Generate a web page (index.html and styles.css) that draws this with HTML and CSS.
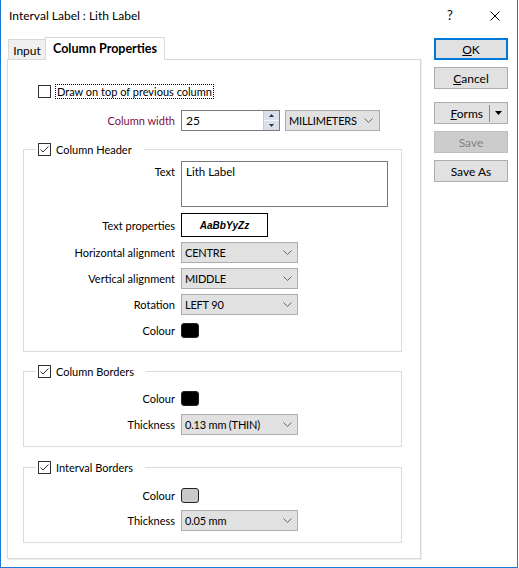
FILE: index.html
```html
<!DOCTYPE html>
<html>
<head>
<meta charset="utf-8">
<title>Interval Label : Lith Label</title>
<link rel="stylesheet" href="styles.css">
</head>
<body>
<div class="window">
  <div class="titlebar">
    <span class="title">Interval Label : Lith Label</span>
    <span class="help">?</span>
    <svg class="close" width="10" height="10" viewBox="0 0 10 10"><path d="M0.5 0.5 L9.5 9.5 M9.5 0.5 L0.5 9.5" stroke="#000" stroke-width="1" fill="none"/></svg>
  </div>
  <div class="main">
    <div class="left">
      <div class="tabs">
        <div class="tab tab-input">Input</div>
        <div class="tab tab-active">Column Properties</div>
      </div>
      <div class="panel">
        <div class="draw-row">
          <span class="cb"></span>
          <span class="focus-label">Draw on top of previous column</span>
        </div>
        <div class="frow colwidth-row">
          <span class="lab lab-outer lab-red">Column width</span>
          <div class="spin">
            <span class="spin-val">25</span>
            <span class="spin-btns">
              <span class="spin-up"><svg width="5" height="3" viewBox="0 0 5 3"><path d="M2.5 0 L5 3 L0 3 Z" fill="#333"/></svg></span>
              <span class="spin-down"><svg width="5" height="3" viewBox="0 0 5 3"><path d="M0 0 L5 0 L2.5 3 Z" fill="#333"/></svg></span>
            </span>
          </div>
          <div class="select select-units"><span>MILLIMETERS</span><svg class="chev" width="9" height="5" viewBox="0 0 9 5"><path d="M0.5 0.5 L4.5 4.5 L8.5 0.5" stroke="#666" fill="none"/></svg></div>
        </div>

        <fieldset class="group group-header">
          <legend><span class="lg"><span class="cb checked"><svg width="11" height="11" viewBox="0 0 11 11"><path d="M1.5 5.5 L4 8 L9.5 2.5" stroke="#333" stroke-width="1" fill="none"/></svg></span><span>Column Header</span></span></legend>
          <div class="frow frow-top">
            <span class="lab lab-text">Text</span>
            <div class="textbox">Lith Label</div>
          </div>
          <div class="frow gap6">
            <span class="lab">Text properties</span>
            <div class="fontbtn">AaBbYyZz</div>
          </div>
          <div class="frow gap5">
            <span class="lab">Horizontal alignment</span>
            <div class="select select-std"><span>CENTRE</span><svg class="chev" width="9" height="5" viewBox="0 0 9 5"><path d="M0.5 0.5 L4.5 4.5 L8.5 0.5" stroke="#666" fill="none"/></svg></div>
          </div>
          <div class="frow gap5">
            <span class="lab">Vertical alignment</span>
            <div class="select select-std"><span>MIDDLE</span><svg class="chev" width="9" height="5" viewBox="0 0 9 5"><path d="M0.5 0.5 L4.5 4.5 L8.5 0.5" stroke="#666" fill="none"/></svg></div>
          </div>
          <div class="frow gap5">
            <span class="lab">Rotation</span>
            <div class="select select-std"><span>LEFT 90</span><svg class="chev" width="9" height="5" viewBox="0 0 9 5"><path d="M0.5 0.5 L4.5 4.5 L8.5 0.5" stroke="#666" fill="none"/></svg></div>
          </div>
          <div class="frow gap8">
            <span class="lab">Colour</span>
            <span class="swatch swatch-black"></span>
          </div>
        </fieldset>

        <fieldset class="group group-cborders">
          <legend><span class="lg"><span class="cb checked"><svg width="11" height="11" viewBox="0 0 11 11"><path d="M1.5 5.5 L4 8 L9.5 2.5" stroke="#333" stroke-width="1" fill="none"/></svg></span><span>Column Borders</span></span></legend>
          <div class="frow">
            <span class="lab">Colour</span>
            <span class="swatch swatch-black"></span>
          </div>
          <div class="frow gap8">
            <span class="lab">Thickness</span>
            <div class="select select-std"><span>0.13 mm (THIN)</span><svg class="chev" width="9" height="5" viewBox="0 0 9 5"><path d="M0.5 0.5 L4.5 4.5 L8.5 0.5" stroke="#666" fill="none"/></svg></div>
          </div>
        </fieldset>

        <fieldset class="group group-iborders">
          <legend><span class="lg"><span class="cb checked"><svg width="11" height="11" viewBox="0 0 11 11"><path d="M1.5 5.5 L4 8 L9.5 2.5" stroke="#333" stroke-width="1" fill="none"/></svg></span><span>Interval Borders</span></span></legend>
          <div class="frow">
            <span class="lab">Colour</span>
            <span class="swatch swatch-grey"></span>
          </div>
          <div class="frow gap7">
            <span class="lab">Thickness</span>
            <div class="select select-std"><span>0.05 mm</span><svg class="chev" width="9" height="5" viewBox="0 0 9 5"><path d="M0.5 0.5 L4.5 4.5 L8.5 0.5" stroke="#666" fill="none"/></svg></div>
          </div>
        </fieldset>
      </div>
    </div>
    <div class="buttons">
      <div class="btn btn-default"><span><u>O</u>K</span></div>
      <div class="btn btn-cancel"><span><u>C</u>ancel</span></div>
      <div class="btn btn-forms"><span class="forms-text"><u>F</u>orms</span><span class="forms-sep"></span><svg class="forms-arrow" width="7" height="4" viewBox="0 0 7 4"><path d="M0 0 L7 0 L3.5 4 Z" fill="#000"/></svg></div>
      <div class="btn btn-disabled"><span>Save</span></div>
      <div class="btn btn-saveas"><span>Save As</span></div>
    </div>
  </div>
</div>
</body>
</html>
```

FILE: styles.css
```css
* { box-sizing: border-box; }

body {
  margin: 0;
  background: #fff;
  font-family: "Segoe UI", Lato, "Noto Sans", sans-serif;
  font-size: 12px;
  line-height: 15px;
  color: #000;
}

.window {
  width: 518px;
  height: 568px;
  border: 1px solid #1c7ad3;
  border-top: none;
  background: #fff;
  overflow: hidden;
}

.titlebar {
  height: 31px;
  display: flex;
  align-items: center;
  padding-left: 8px;
}
.title { flex: 1; }
.help {
  width: 12px;
  text-align: center;
  font-size: 13px;
  margin-right: 34px;
}
.close { margin-right: 17px; }

.main {
  display: flex;
  padding-top: 6px;
}
.left { margin-left: 6px; }

.tabs {
  display: flex;
  align-items: flex-end;
  height: 23px;
  margin-left: 1px;
  margin-bottom: -1px;
  position: relative;
  z-index: 1;
}
.tab {
  display: flex;
  align-items: center;
  justify-content: center;
  border: 1px solid #d9d9d9;
  border-bottom: none;
}
.tab-input {
  width: 37px;
  height: 20px;
  margin-bottom: 1px;
  background: #f0f0f0;
  border-right: none;
  padding-top: 1px;
}
.tab-active {
  width: 120px;
  height: 23px;
  background: #fff;
  font-weight: bold;
  font-size: 12.5px;
  padding-bottom: 2px;
}

.panel {
  width: 414px;
  height: 500px;
  border: 1px solid #d9d9d9;
  box-shadow: 1px 1px 0 #ececec;
  background: #fff;
  padding: 0 18px 0 15px;
  font-size: 11px;
}

.cb {
  width: 13px;
  height: 13px;
  border: 1px solid #333;
  background: #fff;
  flex: 0 0 auto;
  display: flex;
  align-items: center;
  justify-content: center;
}

.draw-row {
  display: flex;
  align-items: center;
  height: 15px;
  margin-top: 24px;
  margin-left: 15px;
}
.focus-label {
  margin-left: 4px;
  height: 15px;
  line-height: 13px;
  padding: 0 1px;
  border: 1px dotted #000;
}

.frow {
  display: flex;
  align-items: center;
}
.frow-top { align-items: flex-start; }
.gap5 { margin-top: 5px; }
.gap6 { margin-top: 6px; }
.gap7 { margin-top: 7px; }
.gap8 { margin-top: 8px; }

.lab {
  width: 151px;
  margin-right: 6px;
  text-align: right;
  white-space: nowrap;
  flex: 0 0 auto;
}
.lab-outer { width: 152px; }
.lab-red { color: #80103f; }
.lab-text { padding-top: 3px; }

.colwidth-row {
  margin-top: 11px;
  height: 21px;
}

.spin {
  display: flex;
  width: 99px;
  height: 21px;
  border: 1px solid #7a7a7a;
  background: #fff;
}
.spin-val {
  flex: 1;
  padding-left: 4px;
  line-height: 19px;
  font-size: 12px;
}
.spin-btns {
  width: 16px;
  display: flex;
  flex-direction: column;
  border-left: 1px solid #c5c9d4;
}
.spin-up, .spin-down {
  flex: 1;
  background: #dadfeb;
  display: flex;
  align-items: center;
  justify-content: center;
}
.spin-up { border-bottom: 1px solid #f4f5f8; }

.select {
  display: flex;
  align-items: center;
  height: 21px;
  border: 1px solid #adadad;
  background: #e1e1e1;
  padding: 0 5px 0 3px;
  white-space: nowrap;
  letter-spacing: -0.2px;
}
.select span { flex: 1; }
.select-units { width: 95px; margin-left: 5px; padding-right: 6px; }
.select-std { width: 117px; }
.chev { flex: 0 0 auto; }

.group {
  margin: 0;
  padding: 0;
  border: 1px solid #dcdcdc;
  min-width: 0;
}
.group legend {
  margin-left: 12px;
  padding: 0 12px 0 2px;
  height: 15px;
  line-height: 15px;
}
.lg {
  display: flex;
  align-items: center;
  height: 15px;
  gap: 5px;
}
.group-header { margin-top: 11px; padding: 4px 0 13px; }
.group-cborders { margin-top: 12px; padding: 12px 0 11px; }
.group-iborders { margin-top: 13px; padding: 13px 0 11px; }

.textbox {
  width: 207px;
  height: 46px;
  border: 1px solid #7a7a7a;
  padding: 2px 4px;
  line-height: 15px;
  font-size: 11.5px;
}

.fontbtn {
  width: 87px;
  height: 24px;
  border: 1px solid #000;
  background: #fff;
  display: flex;
  align-items: center;
  justify-content: center;
  font-family: "Liberation Sans", Arial, sans-serif;
  font-weight: bold;
  font-style: italic;
  font-size: 10px;
}

.swatch {
  width: 18px;
  height: 15px;
  border: 1px solid #222;
  border-radius: 3px;
}
.swatch-black { background: #000; }
.swatch-grey { background: #c9c9c9; }

.buttons {
  margin-left: 13px;
  margin-top: 1px;
  width: 74px;
  display: flex;
  flex-direction: column;
}
.btn {
  height: 22px;
  border: 1px solid #adadad;
  background: #e1e1e1;
  display: flex;
  align-items: center;
  justify-content: center;
}
.btn-default { border: 2px solid #0078d7; }
.btn-cancel { margin-top: 7px; }
.btn-forms { margin-top: 13px; justify-content: flex-end; padding-right: 5px; }
.forms-sep {
  width: 1px;
  height: 17px;
  background: #8a8a8a;
  margin-left: 6px;
}
.forms-arrow { margin-left: 5px; }
.btn-disabled {
  margin-top: 7px;
  background: #cccccc;
  border-color: #bfbfbf;
  color: #838383;
}
.btn-saveas { margin-top: 7px; }
```
